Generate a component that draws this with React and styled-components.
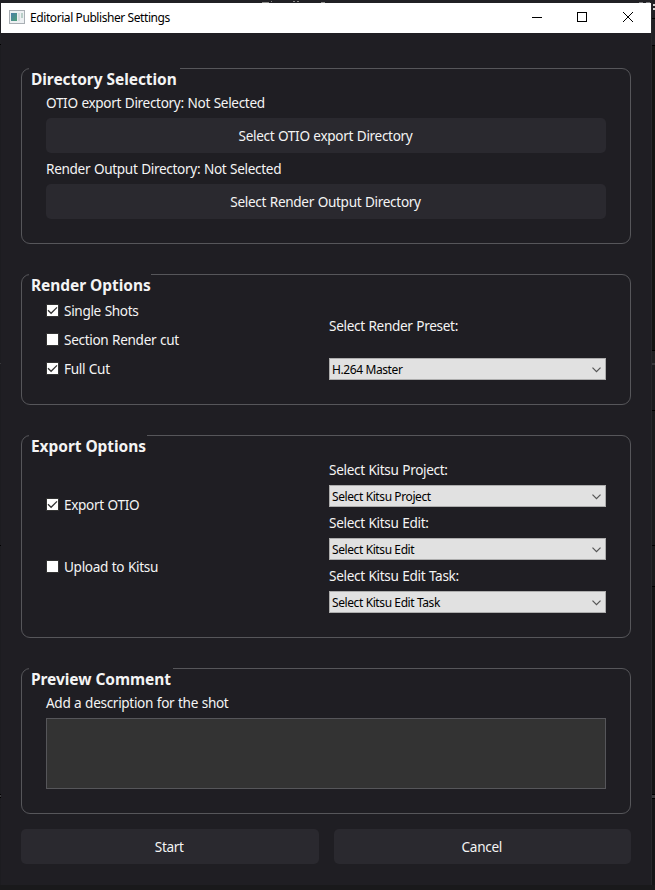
import React from 'react';
import styled, { createGlobalStyle, css } from 'styled-components';

const GlobalStyle = createGlobalStyle`
  * { box-sizing: border-box; }
  body {
    margin: 0;
    background: #19191b;
    font-family: "Noto Sans", "Open Sans", sans-serif;
    overflow: hidden;
  }
`;

/* Application that shows around the edges of the dialog */
const Backdrop = styled.div`
  position: relative;
  width: 655px;
  height: 890px;
  padding: 3px 0 0 1px;
  overflow: hidden;
  background:
    linear-gradient(#202024, #202024) 0 0 / 655px 3px no-repeat,
    linear-gradient(
      #202024 0 18px, #000 18px 19px, #202024 19px 45px, #000 45px 46px,
      #141413 46px 350px, #000 350px 351px, #202022 351px 363px, #38383b 363px 365px,
      #1b1b1e 365px 410px, #000 410px 411px, #1a1a1c 411px 545px, #000 545px 546px,
      #1a1a1c 546px 586px, #000 586px 587px, #141415 587px 794px, #000 794px 795px,
      #38383b 795px 798px, #000 798px 799px, #151517 799px
    ) 652px 0 / 3px 885px no-repeat,
    linear-gradient(
      #202024 0 44px, #000 44px 45px, #1c1c20 45px 363px, #38383b 363px 364px,
      #1c1c20 364px 545px, #000 545px 546px, #1c1c20 546px 794px, #000 794px 795px,
      #38383b 795px 797px, #000 797px 798px, #1c1c20 798px
    ) 0 0 / 1px 885px no-repeat,
    #19191b;
`;

const BackdropMarks = styled.svg`
  position: absolute;
  top: 0;
  left: 0;
  width: 655px;
  height: 12px;
`;

const Dialog = styled.div`
  width: 650px;
  height: 882px;
  display: flex;
  flex-direction: column;
  background: #1f1e23;
`;

const DialogFrame = styled.div`
  width: 651px;
  height: 882px;
  border-right: 1px solid #27272b;
  border-bottom: 1px solid #27272b;
`;

const TitleBar = styled.header`
  display: flex;
  align-items: center;
  height: 30px;
  flex: none;
  padding: 0 1px 0 8px;
  background: #fff;
  color: #000;
`;

const WindowTitle = styled.span`
  flex: 1;
  padding-left: 5px;
  font-size: 12px;
  letter-spacing: -0.42px;
  line-height: 28px;
`;

const WindowButton = styled.button`
  display: flex;
  align-items: center;
  justify-content: center;
  width: ${(p) => p.$width || 46}px;
  height: 30px;
  padding: 0 0 2px;
  border: 0;
  background: transparent;
`;

const Body = styled.main`
  flex: 1;
  display: flex;
  flex-direction: column;
  gap: 30px;
  padding: 35px 20px 20px;
`;

const Group = styled.section`
  width: 610px;
  height: ${(p) => p.$height}px;
  border: 1px solid #56565a;
  border-radius: 9px;
`;

/* The caption masks the part of the frame that it sits on */
const GroupTitle = styled.h2`
  width: ${(p) => p.$width}px;
  height: 23px;
  margin: -1px 0 0 7px;
  padding-left: 2px;
  background: #1f1e23;
  color: #f4f4f4;
  font-size: 15.5px;
  font-weight: 700;
  letter-spacing: -0.06px;
  line-height: 23px;
  white-space: nowrap;
`;

const bodyText = css`
  color: #f4f4f4;
  font-family: inherit;
  font-size: 13.6px;
  letter-spacing: -0.33px;
  word-spacing: 0.5px;
  white-space: nowrap;
`;

const Stack = styled.div`
  display: flex;
  flex-direction: column;
  padding: 0 24px;
`;

const Columns = styled.div`
  display: grid;
  grid-template-columns: 283px 277px;
  padding: 0 24px;
`;

const Column = styled.div`
  display: flex;
  flex-direction: column;
  gap: ${(p) => p.$gap || 0}px;
  padding-top: ${(p) => p.$top || 0}px;
`;

const Label = styled.label`
  ${bodyText}
  height: ${(p) => p.$height || 31}px;
  line-height: ${(p) => p.$line || 31}px;
`;

const Button = styled.button`
  ${bodyText}
  flex: ${(p) => (p.$grow ? 1 : 'none')};
  height: 35px;
  padding: 0 1px 0 0;
  border: 0;
  border-radius: 5px;
  background: #2a292f;
`;

const CheckRow = styled.div`
  ${bodyText}
  display: flex;
  align-items: center;
  gap: 5px;
  height: 20px;
  line-height: 20px;
`;

const CheckBox = styled.span`
  display: flex;
  width: 13px;
  height: 13px;
  margin-top: -1px;
  border: 1px solid #333;
  background: #fff;
`;

const Combo = styled.div`
  display: flex;
  align-items: center;
  justify-content: space-between;
  flex: none;
  height: 22px;
  padding: 1px 4px 0 2px;
  border: 1px solid #adadad;
  background: #e1e1e1;
  color: #000;
  font-size: 12px;
  letter-spacing: -0.4px;
  line-height: 20px;
`;

const CommentBox = styled.textarea`
  display: block;
  height: 71px;
  border: 1px solid #56565a;
  border-radius: 0;
  background: #333;
  color: #f4f4f4;
  resize: none;
  outline: none;
`;

const Actions = styled.footer`
  display: flex;
  gap: 15px;
  width: 610px;
  margin-top: -15px;
`;

const AppIconDrawing = styled.svg`
  margin-top: -2px;
`;

function AppIcon() {
  return (
    <AppIconDrawing width="16" height="14" viewBox="0 0 16 14">
      <defs>
        <linearGradient id="pane" x1="0" y1="0" x2="1" y2="1">
          <stop offset="0" stopColor="#4a7fa8" />
          <stop offset="1" stopColor="#4f9f78" />
        </linearGradient>
      </defs>
      <rect x="0.5" y="0.5" width="15" height="13" fill="#edf0f2" stroke="#a9afb4" />
      <rect x="2" y="3" width="6" height="8" fill="url(#pane)" />
      <rect x="9" y="3" width="2" height="8" fill="#d9dde0" />
      <rect x="12" y="3" width="2" height="5" fill="#b9cfc8" />
    </AppIconDrawing>
  );
}

function Check({ checked, children }) {
  return (
    <CheckRow>
      <CheckBox>
        {checked && (
          <svg width="11" height="11" viewBox="0 0 11 11">
            <path d="M1 5.2 L4.1 8.3 L10 2.4" fill="none" stroke="#333" strokeWidth="1.3" />
          </svg>
        )}
      </CheckBox>
      {children}
    </CheckRow>
  );
}

function Select({ children }) {
  return (
    <Combo>
      {children}
      <svg width="9" height="6" viewBox="0 0 9 6">
        <path d="M0.5 0.7 L4.5 4.7 L8.5 0.7" fill="none" stroke="#555" strokeWidth="1.2" />
      </svg>
    </Combo>
  );
}

export default function App() {
  return (
    <>
      <GlobalStyle />
      <Backdrop>
        <BackdropMarks viewBox="0 0 655 12">
          <path d="M262 2.5h7M271 1.5h1M293 1.5h2M297 1.5h2M321 2.5h4" stroke="#8a8a88" />
          <path d="M639 2.5h4M646 2.5h4" stroke="#77777a" />
          <path d="M653 5h2M653 9h2" stroke="#d5d5d5" strokeWidth="2" />
        </BackdropMarks>
        <DialogFrame>
          <Dialog>
            <TitleBar>
              <AppIcon />
              <WindowTitle>Editorial Publisher Settings</WindowTitle>
              <WindowButton aria-label="Minimize" $width={44}>
                <svg width="10" height="10"><path d="M0 5.5h10" stroke="#000" /></svg>
              </WindowButton>
              <WindowButton aria-label="Maximize">
                <svg width="10" height="10"><rect x="0.5" y="0.5" width="9" height="9" fill="none" stroke="#000" /></svg>
              </WindowButton>
              <WindowButton aria-label="Close" $width={45}>
                <svg width="10" height="10"><path d="M0 0L10 10M10 0L0 10" stroke="#000" /></svg>
              </WindowButton>
            </TitleBar>
            <Body>
              <Group $height={176}>
                <GroupTitle $width={151}>Directory Selection</GroupTitle>
                <Stack>
                  <Label $height={27} $line={24}>OTIO export Directory: Not Selected</Label>
                  <Button>Select OTIO export Directory</Button>
                  <Label>Render Output Directory: Not Selected</Label>
                  <Button>Select Render Output Directory</Button>
                </Stack>
              </Group>

              <Group $height={131}>
                <GroupTitle $width={122}>Render Options</GroupTitle>
                <Columns>
                  <Column $gap={9} $top={4}>
                    <Check checked>Single Shots</Check>
                    <Check>Section Render cut</Check>
                    <Check checked>Full Cut</Check>
                  </Column>
                  <Column $top={13}>
                    <Label $height={48} $line={32}>Select Render Preset:</Label>
                    <Select>H.264 Master</Select>
                  </Column>
                </Columns>
              </Group>

              <Group $height={203}>
                <GroupTitle $width={118}>Export Options</GroupTitle>
                <Columns>
                  <Column $gap={42} $top={37}>
                    <Check checked>Export OTIO</Check>
                    <Check>Upload to Kitsu</Check>
                  </Column>
                  <Column>
                    <Label $height={27} $line={24}>Select Kitsu Project:</Label>
                    <Select>Select Kitsu Project</Select>
                    <Label>Select Kitsu Edit:</Label>
                    <Select>Select Kitsu Edit</Select>
                    <Label>Select Kitsu Edit Task:</Label>
                    <Select>Select Kitsu Edit Task</Select>
                  </Column>
                </Columns>
              </Group>

              <Group $height={146}>
                <GroupTitle $width={144}>Preview Comment</GroupTitle>
                <Stack>
                  <Label $height={27} $line={24}>Add a description for the shot</Label>
                  <CommentBox aria-label="Description" />
                </Stack>
              </Group>

              <Actions>
                <Button $grow>Start</Button>
                <Button $grow>Cancel</Button>
              </Actions>
            </Body>
          </Dialog>
        </DialogFrame>
      </Backdrop>
    </>
  );
}
